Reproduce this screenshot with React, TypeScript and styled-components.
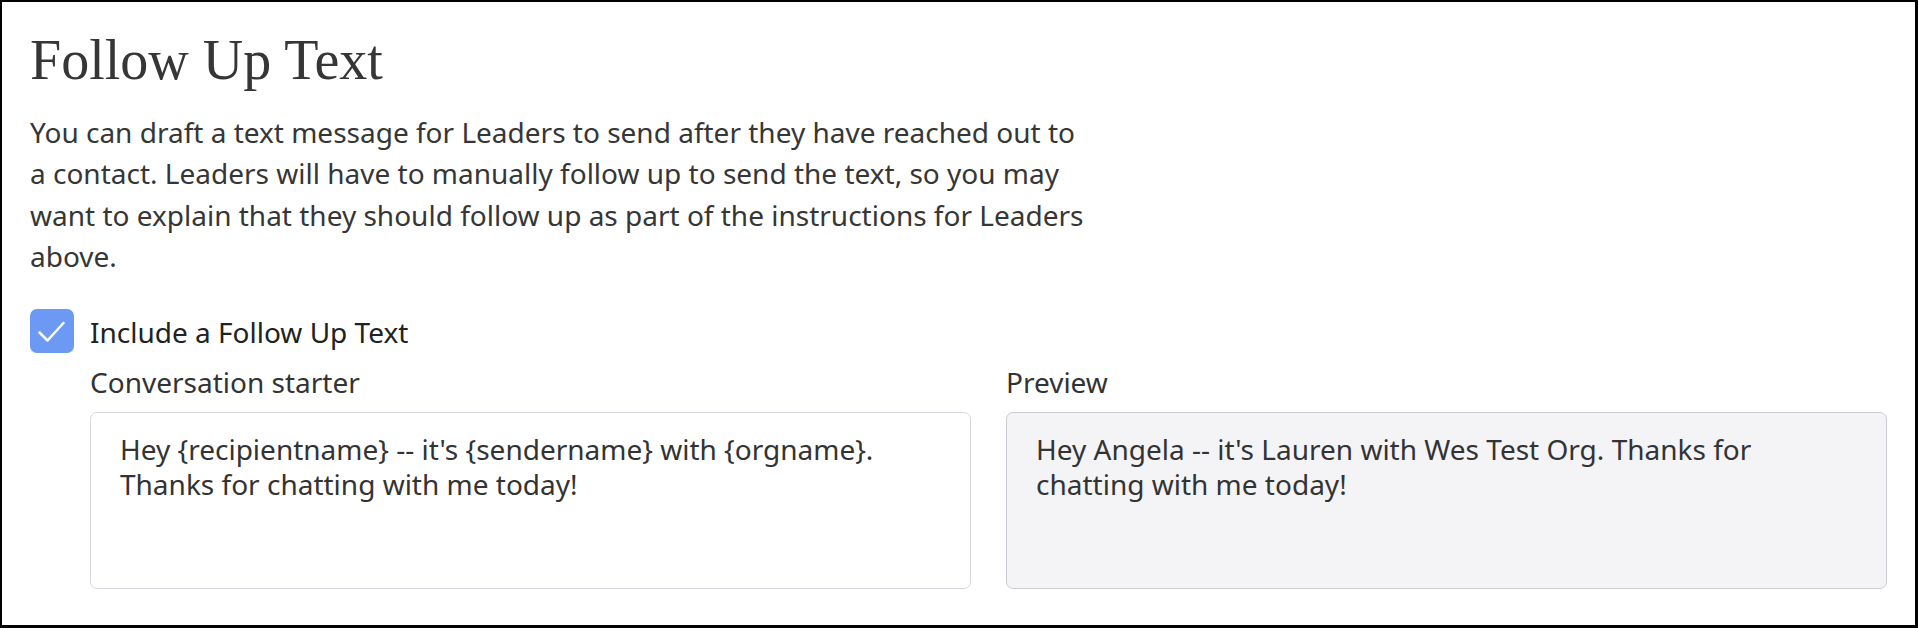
import styled, { createGlobalStyle } from 'styled-components';

const GlobalStyle = createGlobalStyle`
  html, body {
    margin: 0;
    padding: 0;
    background: #fff;
  }
  * {
    box-sizing: border-box;
  }
`;

const Frame = styled.section`
  height: 628px;
  border: 2px solid #000;
  border-right-width: 3px;
  border-bottom-width: 3px;
  padding: 25px 28px 0;
  font-family: 'Noto Sans', 'Open Sans', sans-serif;
  color: #333;
  overflow: hidden;
`;

const Title = styled.h1`
  margin: 0;
  font-family: 'Liberation Serif', serif;
  font-weight: 400;
  font-size: 56px;
  line-height: 66px;
  color: #363636;
`;

const Intro = styled.p`
  margin: 19px 0 0;
  max-width: 1060px;
  font-size: 28px;
  line-height: 41.25px;
  color: #363636;
`;

const CheckRow = styled.label`
  margin-top: 32px;
  display: flex;
  align-items: center;
  gap: 16px;
  font-size: 28px;
  line-height: 41.25px;
  color: #222;
`;

const CheckText = styled.span`
  padding-top: 3px;
`;

const CheckBox = styled.span`
  width: 44px;
  height: 44px;
  flex: none;
  border-radius: 7px;
  background: #6b99f4;
  display: flex;
  align-items: center;
  justify-content: center;
`;

const Fields = styled.div`
  margin: 12px 0 0 60px;
  display: grid;
  grid-template-columns: 1fr 1fr;
  column-gap: 35px;
`;

const Field = styled.div`
  display: flex;
  flex-direction: column;
  gap: 12px;
`;

const FieldLabel = styled.span`
  font-size: 28px;
  line-height: 35px;
  color: #333;
`;

const boxStyles = `
  height: 177px;
  padding: 19px 29px;
  border-radius: 7px;
  font-family: 'Noto Sans', 'Open Sans', sans-serif;
  font-size: 28px;
  line-height: 34.5px;
  color: #333;
`;

const Editor = styled.textarea`
  ${boxStyles}
  width: 100%;
  display: block;
  resize: none;
  outline: none;
  background: #fff;
  border: 1.5px solid #d6d8de;
`;

const PreviewBox = styled.div<{ $tone?: string }>`
  ${boxStyles}
  background: ${({ $tone }) => $tone ?? '#f4f4f7'};
  border: 1.5px solid #cbcdd4;
`;

const Check = () => (
  <svg width="44" height="44" viewBox="0 0 44 44" fill="none">
    <path d="M9.5 23.5 L17.5 31.5 L33.5 14" stroke="#fff" strokeWidth="2.5" strokeLinecap="round" strokeLinejoin="round" />
  </svg>
);

const App = () => {
  return (
    <>
      <GlobalStyle />
      <Frame>
        <Title>Follow Up Text</Title>
        <Intro>
          You can draft a text message for Leaders to send after they have reached out to a contact. Leaders will
          have to manually follow up to send the text, so you may want to explain that they should follow up as
          part of the instructions for Leaders above.
        </Intro>
        <CheckRow>
          <CheckBox>
            <Check />
          </CheckBox>
          <CheckText>Include a Follow Up Text</CheckText>
        </CheckRow>
        <Fields>
          <Field>
            <FieldLabel>Conversation starter</FieldLabel>
            <Editor
              spellCheck={false}
              defaultValue="Hey {recipientname} -- it's {sendername} with {orgname}. Thanks for chatting with me today!"
            />
          </Field>
          <Field>
            <FieldLabel>Preview</FieldLabel>
            <PreviewBox>Hey Angela -- it's Lauren with Wes Test Org. Thanks for chatting with me today!</PreviewBox>
          </Field>
        </Fields>
      </Frame>
    </>
  );
};

export default App;
